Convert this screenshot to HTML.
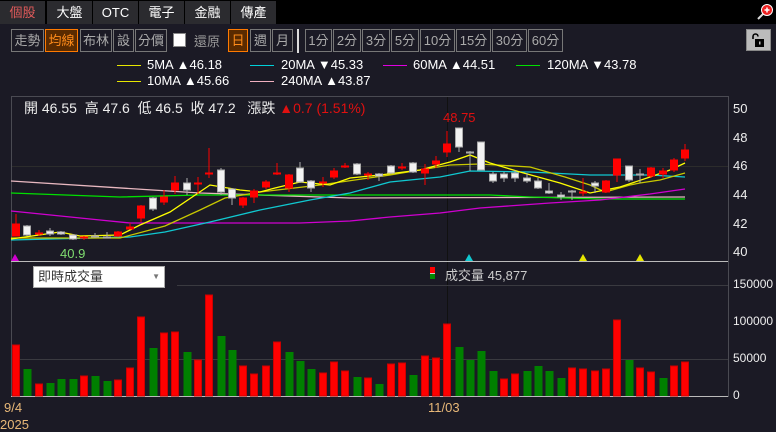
<!DOCTYPE html>
<html><head><meta charset="utf-8"><style>
*{margin:0;padding:0;box-sizing:border-box}
body{width:776px;height:430px;background:#1b1a25;overflow:hidden;position:relative;font-family:"Liberation Sans","Noto Sans CJK TC",sans-serif;color:#ddd}
.top{position:absolute;left:0;top:0;width:776px;height:24px;background:#000}
.tab{position:absolute;top:1px;height:23px;width:45px;background:#2b2b2f;color:#fff;font-size:13px;line-height:23px;text-align:center}
.b{position:absolute;top:29px;height:23px;border:1px solid #777;color:#aaa;font-size:13px;line-height:21px;text-align:center}
.o{border-color:#ff7a00;background:#5a2b00;color:#ff8c1a}
.lg{position:absolute;font-size:13px;color:#fff;white-space:nowrap}
.ln{position:absolute;height:1px;width:24px}
.ax{position:absolute;font-size:13px;color:#eee}
</style></head><body>
<div class="top"></div>
<div class="tab" style="left:0;color:#e05a5a">個股</div>
<div class="tab" style="left:47px">大盤</div>
<div class="tab" style="left:93px">OTC</div>
<div class="tab" style="left:139px">電子</div>
<div class="tab" style="left:185px">金融</div>
<div class="tab" style="left:231px">傳產</div>
<svg style="position:absolute;left:756px;top:3px" width="18" height="18"><line x1="2" y1="16" x2="8" y2="10" stroke="#ddd" stroke-width="2"/><circle cx="11" cy="7" r="5.5" fill="#e22" stroke="#fff" stroke-width="1"/><path d="M8.5 7h5M11 4.5v5" stroke="#fff" stroke-width="1.5"/></svg>

<div class="b" style="left:11px;width:33px">走勢</div>
<div class="b o" style="left:45px;width:33px">均線</div>
<div class="b" style="left:80px;width:32px">布林</div>
<div class="b" style="left:113px;width:21px">設</div>
<div class="b" style="left:135px;width:32px">分價</div>
<div style="position:absolute;left:173px;top:33px;width:13px;height:14px;background:#fff;border:1px solid #888"></div>
<div style="position:absolute;left:194px;top:31px;font-size:13px;color:#999">還原</div>
<div class="b o" style="left:228px;width:20px">日</div>
<div class="b" style="left:250px;width:21px">週</div>
<div class="b" style="left:272px;width:21px">月</div>
<div style="position:absolute;left:297px;top:29px;width:2px;height:24px;background:#ddd"></div>
<div class="b" style="left:305px;width:27px">1分</div>
<div class="b" style="left:333px;width:28px">2分</div>
<div class="b" style="left:362px;width:28px">3分</div>
<div class="b" style="left:391px;width:28px">5分</div>
<div class="b" style="left:420px;width:35px">10分</div>
<div class="b" style="left:456px;width:35px">15分</div>
<div class="b" style="left:492px;width:35px">30分</div>
<div class="b" style="left:528px;width:35px">60分</div>
<div style="position:absolute;left:746px;top:29px;width:25px;height:22px;background:#bbb;border:1px solid #888"></div>
<svg style="position:absolute;left:750px;top:32px" width="16" height="16"><path d="M3 7V4.5a2.5 2.5 0 0 1 5 0" fill="none" stroke="#000" stroke-width="1.6"/><rect x="5" y="7" width="9" height="8" fill="#000"/><rect x="9" y="9.5" width="1.5" height="3" fill="#bbb"/></svg>

<div class="ln" style="left:117px;top:65px;background:#e6e600"></div><div class="lg" style="left:147px;top:57px">5MA ▲46.18</div>
<div class="ln" style="left:250px;top:65px;background:#00d0d8"></div><div class="lg" style="left:281px;top:57px">20MA ▼45.33</div>
<div class="ln" style="left:383px;top:65px;background:#e000e0"></div><div class="lg" style="left:413px;top:57px">60MA ▲44.51</div>
<div class="ln" style="left:516px;top:65px;background:#00e000"></div><div class="lg" style="left:547px;top:57px">120MA ▼43.78</div>
<div class="ln" style="left:117px;top:81px;background:#e6e600"></div><div class="lg" style="left:147px;top:73px">10MA ▲45.66</div>
<div class="ln" style="left:250px;top:81px;background:#f0b0c0"></div><div class="lg" style="left:281px;top:73px">240MA ▲43.87</div>

<svg style="position:absolute;left:0;top:0" width="776" height="430">
<rect x="11.5" y="96.5" width="717" height="300" fill="none" stroke="#4a4a52"/>
<line x1="12" y1="166.5" x2="728" y2="166.5" stroke="#2c2c2c"/>
<line x1="447.5" y1="97" x2="447.5" y2="396" stroke="#111"/>
<line x1="177" y1="285.5" x2="728" y2="285.5" stroke="#3a3a40"/>
<line x1="12" y1="359.5" x2="728" y2="359.5" stroke="#3a3a40"/>
<line x1="11" y1="261.5" x2="728" y2="261.5" stroke="#bbb"/>
<line x1="11" y1="396.5" x2="728" y2="396.5" stroke="#bbb"/>
<g fill="none" stroke-width="1.3">
<polyline stroke="#e8b8c0" points="11,181 200,193 350,198 685,197"/>
<polyline stroke="#00e000" points="11,193 120,197 200,195 490,195 530,197 600,199 685,199"/>
<polyline stroke="#d000d0" points="11,211 100,220 130,223 300,223 350,221 390,217 440,213 480,208 550,203 600,200 650,194 685,189"/>
<polyline stroke="#10c8d0" points="11,240 130,237 165,232 210,222 260,210 310,200 350,193 390,182 440,177 470,171 530,172 590,175 650,175 685,177"/>
<polyline stroke="#c8c800" points="11,238 120,238 165,226 200,210 225,198 260,192 320,185 390,175 450,165 480,164 530,167 565,177 590,185 605,192 630,185 640,183 660,180 685,173"/>
<polyline stroke="#ffff00" points="11,239 60,232 80,236 120,235 140,225 170,212 210,185 240,190 260,192 275,188 300,182 330,185 350,178 380,175 420,170 450,162 470,155 490,163 520,172 560,183 590,193 620,187 650,177 670,170 685,163"/>
</g>
<g id="c"></g>
<g stroke-width="1">
<!-- candles: red up -->
<g stroke="#f00" fill="#f00">
<line x1="16" y1="214" x2="16" y2="236"/><rect x="12.5" y="224" width="7" height="12"/>
<line x1="39" y1="230" x2="39" y2="236"/><rect x="35.5" y="233" width="7" height="1"/>
<line x1="84" y1="236" x2="84" y2="240"/><rect x="80.5" y="237" width="7" height="1"/>
<line x1="118" y1="231" x2="118" y2="237"/><rect x="114.5" y="232" width="7" height="4"/>
<line x1="130" y1="223" x2="130" y2="229"/><rect x="126.5" y="227" width="7" height="2"/>
<line x1="141" y1="205" x2="141" y2="222"/><rect x="137.5" y="206" width="7" height="12"/>
<line x1="164" y1="190" x2="164" y2="205"/><rect x="160.5" y="197" width="7" height="5"/>
<line x1="175" y1="176" x2="175" y2="194"/><rect x="171.5" y="183" width="7" height="7"/>
<line x1="198" y1="177" x2="198" y2="194"/><rect x="194.5" y="183" width="7" height="1"/>
<line x1="209" y1="148" x2="209" y2="178"/><rect x="205.5" y="173" width="7" height="1"/>
<line x1="243" y1="197" x2="243" y2="208"/><rect x="239.5" y="198" width="7" height="7"/>
<line x1="254" y1="189" x2="254" y2="203"/><rect x="250.5" y="191" width="7" height="6"/>
<line x1="266" y1="180" x2="266" y2="189"/><rect x="262.5" y="182" width="7" height="5"/>
<line x1="277" y1="163" x2="277" y2="175"/><rect x="273.5" y="173" width="7" height="1"/>
<line x1="289" y1="174" x2="289" y2="192"/><rect x="285.5" y="175" width="7" height="13"/>
<line x1="323" y1="177" x2="323" y2="187"/><rect x="319.5" y="182" width="7" height="1"/>
<line x1="334" y1="168" x2="334" y2="179"/><rect x="330.5" y="171" width="7" height="6"/>
<line x1="345" y1="163" x2="345" y2="168"/><rect x="341.5" y="166" width="7" height="1"/>
<line x1="368" y1="172" x2="368" y2="180"/><rect x="364.5" y="174" width="7" height="1"/>
<line x1="402" y1="163" x2="402" y2="170"/><rect x="398.5" y="167" width="7" height="1"/>
<line x1="425" y1="164" x2="425" y2="185"/><rect x="421.5" y="169" width="7" height="4"/>
<line x1="436" y1="156" x2="436" y2="168"/><rect x="432.5" y="161" width="7" height="3"/>
<line x1="447" y1="131" x2="447" y2="157"/><rect x="443.5" y="144" width="7" height="8"/>
<line x1="583" y1="178" x2="583" y2="196"/><rect x="579.5" y="192" width="7" height="1"/>
<line x1="606" y1="180" x2="606" y2="193"/><rect x="602.5" y="181" width="7" height="11"/>
<line x1="617" y1="159" x2="617" y2="182"/><rect x="613.5" y="159" width="7" height="16"/>
<line x1="651" y1="167" x2="651" y2="178"/><rect x="647.5" y="168" width="7" height="8"/>
<line x1="663" y1="168" x2="663" y2="178"/><rect x="659.5" y="171" width="7" height="3"/>
<line x1="674" y1="158" x2="674" y2="172"/><rect x="670.5" y="160" width="7" height="10"/>
<line x1="685" y1="144" x2="685" y2="161"/><rect x="681.5" y="150" width="7" height="8"/>
</g>
<g stroke="#aaa" fill="#f2f2f2">
<line x1="27" y1="225" x2="27" y2="236"/><rect x="23.5" y="226" width="7" height="9"/>
<line x1="50" y1="228" x2="50" y2="236"/><rect x="46.5" y="231" width="7" height="3"/>
<line x1="61" y1="231" x2="61" y2="235"/><rect x="57.5" y="232" width="7" height="2"/>
<line x1="73" y1="234" x2="73" y2="240"/><rect x="69.5" y="235" width="7" height="4"/>
<line x1="95" y1="233" x2="95" y2="238"/><rect x="91.5" y="236" width="7" height="1"/>
<line x1="107" y1="232" x2="107" y2="238"/><rect x="103.5" y="237" width="7" height="1"/>
<line x1="153" y1="197" x2="153" y2="211"/><rect x="149.5" y="198" width="7" height="11"/>
<line x1="187" y1="178" x2="187" y2="195"/><rect x="183.5" y="183" width="7" height="7"/>
<line x1="221" y1="168" x2="221" y2="195"/><rect x="217.5" y="170" width="7" height="22"/>
<line x1="232" y1="188" x2="232" y2="205"/><rect x="228.5" y="189" width="7" height="9"/>
<line x1="300" y1="162" x2="300" y2="183"/><rect x="296.5" y="168" width="7" height="14"/>
<line x1="311" y1="180" x2="311" y2="192"/><rect x="307.5" y="181" width="7" height="7"/>
<line x1="357" y1="163" x2="357" y2="175"/><rect x="353.5" y="164" width="7" height="10"/>
<line x1="379" y1="173" x2="379" y2="181"/><rect x="375.5" y="174" width="7" height="2"/>
<line x1="391" y1="165" x2="391" y2="174"/><rect x="387.5" y="166" width="7" height="7"/>
<line x1="413" y1="162" x2="413" y2="173"/><rect x="409.5" y="163" width="7" height="9"/>
<line x1="459" y1="128" x2="459" y2="152"/><rect x="455.5" y="128" width="7" height="19"/>
<line x1="470" y1="151" x2="470" y2="171"/><rect x="466.5" y="152" width="7" height="1"/>
<line x1="481" y1="142" x2="481" y2="170"/><rect x="477.5" y="142" width="7" height="28"/>
<line x1="493" y1="172" x2="493" y2="183"/><rect x="489.5" y="174" width="7" height="7"/>
<line x1="504" y1="172" x2="504" y2="182"/><rect x="500.5" y="174" width="7" height="4"/>
<line x1="515" y1="170" x2="515" y2="182"/><rect x="511.5" y="173" width="7" height="5"/>
<line x1="527" y1="173" x2="527" y2="183"/><rect x="523.5" y="178" width="7" height="3"/>
<line x1="538" y1="178" x2="538" y2="189"/><rect x="534.5" y="181" width="7" height="7"/>
<line x1="549" y1="183" x2="549" y2="194"/><rect x="545.5" y="191" width="7" height="2"/>
<line x1="561" y1="192" x2="561" y2="200"/><rect x="557.5" y="195" width="7" height="2"/>
<line x1="572" y1="190" x2="572" y2="200"/><rect x="568.5" y="191" width="7" height="1"/>
<line x1="595" y1="181" x2="595" y2="193"/><rect x="591.5" y="183" width="7" height="3"/>
<line x1="629" y1="166" x2="629" y2="182"/><rect x="625.5" y="166" width="7" height="14"/>
<line x1="640" y1="169" x2="640" y2="183"/><rect x="636.5" y="174" width="7" height="1"/>
</g>
</g>
<!-- volume -->
<g fill="#f00" stroke="#c00">
<rect x="12.5" y="345" width="7" height="51"/><rect x="35.5" y="384" width="7" height="12"/><rect x="80.5" y="376" width="7" height="20"/><rect x="114.5" y="380" width="7" height="16"/><rect x="126.5" y="368" width="7" height="28"/><rect x="137.5" y="317" width="7" height="79"/><rect x="160.5" y="333" width="7" height="63"/><rect x="171.5" y="332" width="7" height="64"/><rect x="194.5" y="360" width="7" height="36"/><rect x="205.5" y="295" width="7" height="101"/><rect x="239.5" y="366" width="7" height="30"/><rect x="250.5" y="374" width="7" height="22"/><rect x="262.5" y="366" width="7" height="30"/><rect x="273.5" y="342" width="7" height="54"/><rect x="319.5" y="373" width="7" height="23"/><rect x="330.5" y="362" width="7" height="34"/><rect x="341.5" y="371" width="7" height="25"/><rect x="364.5" y="378" width="7" height="18"/><rect x="387.5" y="364" width="7" height="32"/><rect x="398.5" y="363" width="7" height="33"/><rect x="421.5" y="356" width="7" height="40"/><rect x="432.5" y="358" width="7" height="38"/><rect x="443.5" y="324" width="7" height="72"/><rect x="500.5" y="379" width="7" height="17"/><rect x="511.5" y="374" width="7" height="22"/><rect x="568.5" y="368" width="7" height="28"/><rect x="579.5" y="369" width="7" height="27"/><rect x="591.5" y="371" width="7" height="25"/><rect x="602.5" y="369" width="7" height="27"/><rect x="613.5" y="320" width="7" height="76"/><rect x="636.5" y="368" width="7" height="28"/><rect x="647.5" y="372" width="7" height="24"/><rect x="670.5" y="366" width="7" height="30"/><rect x="681.5" y="362" width="7" height="34"/>
</g>
<g fill="#008000">
<rect x="23.5" y="369" width="8" height="27"/><rect x="46.5" y="383" width="8" height="13"/><rect x="57.5" y="379" width="8" height="17"/><rect x="69.5" y="379" width="8" height="17"/><rect x="91.5" y="376" width="8" height="20"/><rect x="103.5" y="381" width="8" height="15"/><rect x="149.5" y="348" width="8" height="48"/><rect x="183.5" y="352" width="8" height="44"/><rect x="217.5" y="336" width="8" height="60"/><rect x="228.5" y="350" width="8" height="46"/><rect x="285.5" y="352" width="8" height="44"/><rect x="296.5" y="361" width="8" height="35"/><rect x="307.5" y="369" width="8" height="27"/><rect x="353.5" y="377" width="8" height="19"/><rect x="375.5" y="384" width="8" height="12"/><rect x="409.5" y="375" width="8" height="21"/><rect x="455.5" y="347" width="8" height="49"/><rect x="466.5" y="360" width="8" height="36"/><rect x="477.5" y="351" width="8" height="45"/><rect x="489.5" y="371" width="8" height="25"/><rect x="523.5" y="371" width="8" height="25"/><rect x="534.5" y="366" width="8" height="30"/><rect x="545.5" y="371" width="8" height="25"/><rect x="557.5" y="378" width="8" height="18"/><rect x="625.5" y="360" width="8" height="36"/><rect x="659.5" y="378" width="8" height="18"/>
</g>
<polygon points="11,261 15,254 19,261" fill="#d000d0"/>
<polygon points="465,261 469,254 473,261" fill="#10c8d0"/>
<polygon points="579,261 583,254 587,261" fill="#e6e600"/>
<polygon points="636,261 640,254 644,261" fill="#e6e600"/>
<rect x="430" y="267" width="5" height="6" fill="#f00"/><rect x="430" y="273" width="5" height="1" fill="#ccc"/><rect x="430" y="274" width="5" height="5" fill="#080"/>
</svg>
<div style="position:absolute;left:24px;top:98px;font-size:14px;color:#eee;white-space:nowrap">開 46.55&nbsp; 高 47.6&nbsp; 低 46.5&nbsp; 收 47.2&nbsp;&nbsp; 漲跌 <span style="color:#e01010">▲0.7 (1.51%)</span></div>
<div style="position:absolute;left:443px;top:110px;font-size:13px;color:#e01010">48.75</div>
<div style="position:absolute;left:60px;top:246px;font-size:13px;color:#7fdc6f">40.9</div>
<div class="ax" style="left:733px;top:101px">50</div>
<div class="ax" style="left:733px;top:130px">48</div>
<div class="ax" style="left:733px;top:158px">46</div>
<div class="ax" style="left:733px;top:187px">44</div>
<div class="ax" style="left:733px;top:216px">42</div>
<div class="ax" style="left:733px;top:244px">40</div>
<div class="ax" style="left:733px;top:277px;font-size:12px">150000</div>
<div class="ax" style="left:733px;top:314px;font-size:12px">100000</div>
<div class="ax" style="left:733px;top:351px;font-size:12px">50000</div>
<div class="ax" style="left:733px;top:388px;font-size:12px">0</div>
<div style="position:absolute;left:33px;top:266px;width:132px;height:22px;background:#fff;border:1px solid #aaa;color:#333;font-size:13px;line-height:20px;padding-left:4px">即時成交量<span style="position:absolute;right:4px;top:0;font-size:8px;color:#777">▼</span></div>
<div style="position:absolute;left:445px;top:265px;font-size:13px;color:#ccc">成交量 45,877</div>
<div style="position:absolute;left:4px;top:400px;font-size:13px;color:#e8b878">9/4</div>
<div style="position:absolute;left:0;top:417px;font-size:13px;color:#e8b878">2025</div>
<div style="position:absolute;left:428px;top:400px;font-size:13px;color:#e8b878">11/03</div>
</body></html>
